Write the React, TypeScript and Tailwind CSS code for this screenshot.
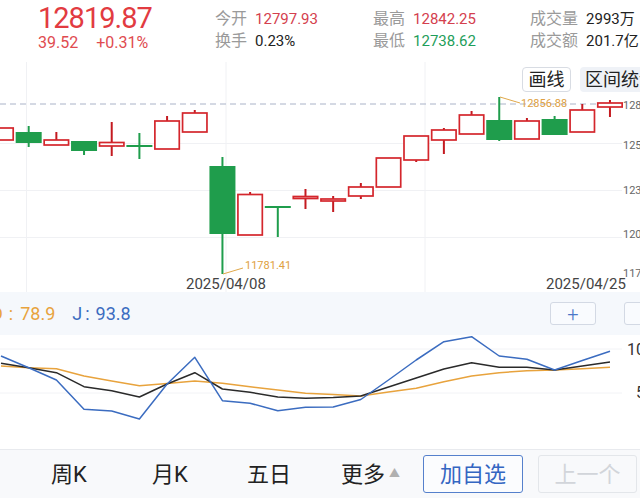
import React from 'react';

type Kind = 'r' | 'g';
// [boxTop, boxBottom, wickTop, wickBottom, kind] in page pixels
const candles: [number, number, number, number, Kind][] = [
  [128, 140, 128, 140, 'r'],
  [132, 143, 126, 147, 'g'],
  [140, 145, 132, 145, 'r'],
  [141, 151, 141, 155, 'g'],
  [142.5, 146, 122, 156, 'r'],
  [146, 146, 133, 159, 'g'],
  [121, 149, 116, 149, 'r'],
  [113, 132, 110, 132, 'r'],
  [166, 234, 157, 274, 'g'],
  [194.5, 235, 192, 235, 'r'],
  [207, 207, 207, 237, 'g'],
  [196.5, 198.5, 189, 209, 'r'],
  [199, 201, 196, 212, 'r'],
  [187, 196, 183, 199, 'r'],
  [158, 187, 158, 187, 'r'],
  [136, 160, 136, 162, 'r'],
  [130, 140, 128, 154, 'r'],
  [115, 134, 111, 134, 'r'],
  [120, 140, 97, 141, 'g'],
  [121, 139, 118, 139, 'r'],
  [119, 135, 116, 135, 'g'],
  [110, 132, 104, 132, 'r'],
  [103, 107, 100, 117, 'r'],
];

const cx = (i: number) => 1 + i * 27.68;

const J = [356, 367.7, 380, 409.3, 411, 419, 384, 357.3, 400.7, 403.3, 410.7, 407.3, 407, 399.5, 380, 360, 341.7, 336.7, 356, 359.3, 370, 360.5, 351.3];
const K = [363.3, 367.7, 372.7, 386.7, 390.7, 397, 384, 372.7, 389, 392.3, 397, 398.3, 397.5, 396, 387, 378, 369, 362.7, 367.3, 367.3, 370, 366, 362];
const D = [366, 367.7, 368.7, 376, 381, 385.7, 383.5, 381, 383.3, 386.7, 390, 393.3, 394.5, 396, 392, 388.3, 381.7, 376, 372.7, 370.7, 370, 368.7, 367.3];

const pts = (arr: number[]) => arr.map((y, i) => `${cx(i).toFixed(1)},${y}`).join(' ');

const RED = '#d4262c';
const REDW = '#c41a20';
const GREEN = '#1f9d4c';

function CandleChart() {
  return (
    <svg width="640" height="230" viewBox="0 62 640 230" className="block">
      {[26.5, 226, 425].map((x) => (
        <line key={x} x1={x} y1={62} x2={x} y2={292} stroke="#f0f1f4" strokeWidth="1" />
      ))}
      {[143.5, 190.5, 237.5].map((y) => (
        <line key={y} x1={0} y1={y} x2={622} y2={y} stroke="#f0f1f4" strokeWidth="1" />
      ))}
      <line x1={0} y1={104} x2={622} y2={104} stroke="#aab3c8" strokeWidth="1" strokeDasharray="6 4" />

      {candles.map(([top, bot, hi, lo, k], i) => {
        const x = cx(i);
        const col = k === 'r' ? RED : GREEN;
        const wick = k === 'r' ? REDW : GREEN;
        return (
          <g key={i}>
            <line x1={x} y1={hi} x2={x} y2={lo} stroke={wick} strokeWidth="2" />
            {top === bot ? (
              <line x1={x - 13} y1={top} x2={x + 13} y2={top} stroke={col} strokeWidth="2" />
            ) : k === 'g' ? (
              <rect x={x - 13} y={top} width={26} height={bot - top} fill={GREEN} />
            ) : (
              <rect x={x - 12.2} y={top} width={24.4} height={bot - top} fill="#ffffff" stroke={RED} strokeWidth="1.7" />
            )}
          </g>
        );
      })}

      <polyline points="500,97 520,103" fill="none" stroke="#e0a84a" strokeWidth="1" />
      <text x={521} y={107} fontSize="11" fill="#e0a040">12856.88</text>
      <polyline points="223,274 243,268" fill="none" stroke="#e0a84a" strokeWidth="1" />
      <text x={245} y={269} fontSize="11" fill="#e0a040">11781.41</text>

      <text x={186} y={289} fontSize="15" fill="#444">2025/04/08</text>
      <text x={546} y={289} fontSize="15" fill="#444">2025/04/25</text>

      <g fontSize="11" fill="#666">
        <text x={623} y={109}>128</text>
        <text x={623} y={149}>125</text>
        <text x={623} y={194}>123</text>
        <text x={623} y={238}>120</text>
        <text x={623} y={277}>117</text>
      </g>
    </svg>
  );
}

function KdjChart() {
  return (
    <svg width="640" height="114" viewBox="0 335 640 114" className="block">
      <line x1={0} y1={349} x2={622} y2={349} stroke="#f2f3f6" strokeWidth="1" />
      <line x1={0} y1={393} x2={622} y2={393} stroke="#f2f3f6" strokeWidth="1" />
      <polyline points={pts(D)} fill="none" stroke="#e8a33d" strokeWidth="1.5" strokeLinejoin="round" />
      <polyline points={pts(K)} fill="none" stroke="#2a2a2a" strokeWidth="1.5" strokeLinejoin="round" />
      <polyline points={pts(J)} fill="none" stroke="#3b6cc0" strokeWidth="1.5" strokeLinejoin="round" />
      <text x={654} y={355} fontSize="16" fill="#333" textAnchor="end">100</text>
      <text x={654} y={398} fontSize="16" fill="#333" textAnchor="end">50</text>
    </svg>
  );
}

function Stat({ label, value, color }: { label: string; value: string; color: string }) {
  return (
    <div className="h-[22px] leading-[22px] flex items-center whitespace-nowrap">
      <span className="text-[16px] text-[#9a9a9a]">{label}</span>
      <span className={`ml-[8px] text-[15px] ${color}`}>{value}</span>
    </div>
  );
}

export default function App() {
  return (
    <div className="w-[640px] h-[498px] overflow-hidden bg-white font-['Roboto','Noto_Sans_CJK_SC',sans-serif] text-[#222]">
      {/* header */}
      <div className="h-[62px] flex">
        <div className="w-[215px] pl-[38px] pt-[3px]">
          <div className="h-[30px] leading-[30px] text-[29px] tracking-[-1px] text-[#e23b41]">12819.87</div>
          <div className="h-[20px] leading-[20px] text-[16px] text-[#e04b50] flex">
            <span>39.52</span>
            <span className="ml-[18px]">+0.31%</span>
          </div>
        </div>
        <div className="w-[158px] pt-[8px]">
          <Stat label="今开" value="12797.93" color="text-[#d4404e]" />
          <Stat label="换手" value="0.23%" color="text-[#222]" />
        </div>
        <div className="w-[157px] pt-[8px]">
          <Stat label="最高" value="12842.25" color="text-[#d4404e]" />
          <Stat label="最低" value="12738.62" color="text-[#1e9e5a]" />
        </div>
        <div className="flex-1 pt-[8px]">
          <Stat label="成交量" value="2993万" color="text-[#222]" />
          <Stat label="成交额" value="201.7亿" color="text-[#222]" />
        </div>
      </div>

      {/* candles */}
      <div className="relative h-[230px]">
        <CandleChart />
        <div className="absolute left-[522px] top-[5px] h-[25px] w-[49px] rounded-[4px] border border-[#d8dce3] bg-white flex items-center justify-center text-[18px] text-[#222]">
          画线
        </div>
        <div className="absolute left-[580px] top-[5px] h-[25px] w-[80px] rounded-[4px] bg-[#eff2f7] pl-[5px] flex items-center text-[18px] text-[#222] whitespace-nowrap">
          区间统计
        </div>
      </div>

      {/* kdj header */}
      <div className="h-[43px] bg-[#f5f8fc] flex items-center text-[18px] whitespace-nowrap">
        <span className="ml-[-9px] text-[#e8a33d]">D</span>
        <span className="ml-[6px] text-[#e8a33d]">:</span>
        <span className="ml-[7px] text-[#e8a33d]">78.9</span>
        <span className="ml-[17px] text-[#3b6cc0]">J</span>
        <span className="ml-[3px] text-[#3b6cc0]">:</span>
        <span className="ml-[6px] text-[#3b6cc0]">93.8</span>
        <div className="ml-auto mr-[-30px] flex gap-[28px]">
          <div className="w-[46px] h-[23px] rounded-[3px] border border-[#d3d9e4] bg-[#f9fbfe] flex items-center justify-center text-[#4a78c8] text-[20px] font-light leading-none">
            +
          </div>
          <div className="w-[46px] h-[23px] rounded-[3px] border border-[#d3d9e4] bg-[#f9fbfe] flex items-center justify-center text-[#4a78c8] text-[20px] font-light leading-none">
            −
          </div>
        </div>
      </div>

      {/* kdj chart */}
      <KdjChart />

      {/* bottom bar */}
      <div className="h-[49px] border-t border-[#e8eaee] bg-[#f8f9fb] flex items-center text-[22px] text-[#222] whitespace-nowrap">
        <div className="pl-[51px] w-[152px]">周K</div>
        <div className="w-[95px]">月K</div>
        <div className="w-[94px]">五日</div>
        <div className="w-[82px] flex items-center">
          更多
          <span className="ml-[4px] text-[11px] text-[#b0b0b0]">▲</span>
        </div>
        <div className="w-[100px] h-[38px] rounded-[3px] border border-[#5580cc] bg-[#fbfcfe] flex items-center justify-center text-[#3466c2]">
          加自选
        </div>
        <div className="ml-[15px] w-[99px] h-[38px] rounded-[3px] border border-[#e3e6ea] flex items-center justify-center text-[#d2d5da]">
          上一个
        </div>
      </div>
    </div>
  );
}
